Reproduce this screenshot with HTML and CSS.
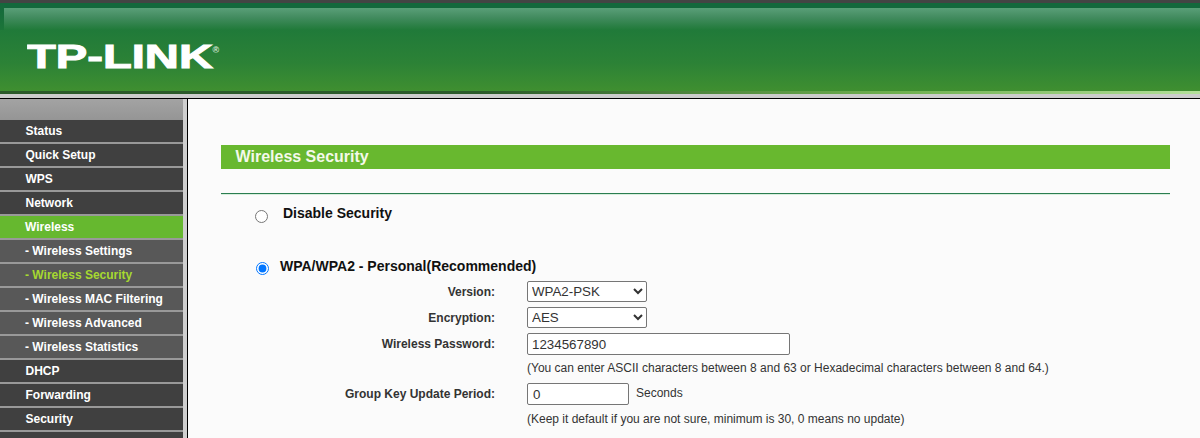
FILE: index.html
```html
<!DOCTYPE html>
<html>
<head>
    <meta charset="utf-8">
    <title>Wireless Security</title>
    <link rel="stylesheet" href="styles.css">
</head>
<body>
    <!-- top banner -->
    <div class="banner">
        <div class="banner-main">
            <svg class="logo" width="200" height="42" viewBox="0 0 200 42">
                <text class="logo-text" x="0" y="31" textLength="186" lengthAdjust="spacingAndGlyphs">TP-LINK</text>
                <text class="logo-mark" x="185.5" y="16">®</text>
            </svg>
        </div>
        <div class="banner-edge"></div>
    </div>

    <div class="layout">
        <!-- left menu -->
        <div class="menu">
            <div class="menu-top"></div>
            <a class="item">Status</a>
            <a class="item">Quick Setup</a>
            <a class="item">WPS</a>
            <a class="item">Network</a>
            <a class="item item-active">Wireless</a>
            <a class="item sub">- Wireless Settings</a>
            <a class="item sub sub-active">- Wireless Security</a>
            <a class="item sub">- Wireless MAC Filtering</a>
            <a class="item sub">- Wireless Advanced</a>
            <a class="item sub">- Wireless Statistics</a>
            <a class="item">DHCP</a>
            <a class="item">Forwarding</a>
            <a class="item">Security</a>
            <a class="item"></a>
        </div>

        <!-- content -->
        <div class="content">
            <div class="title">Wireless Security</div>
            <div class="rule"></div>

            <label class="option option-off">
                <input type="radio" name="security">
                <span>Disable Security</span>
            </label>

            <label class="option option-on">
                <input type="radio" name="security" checked>
                <span>WPA/WPA2 - Personal(Recommended)</span>
            </label>

            <div class="form">
                <label class="form-label">Version:</label>
                <select class="field field-select">
                    <option>WPA2-PSK</option>
                </select>

                <label class="form-label">Encryption:</label>
                <select class="field field-select">
                    <option>AES</option>
                </select>

                <label class="form-label">Wireless Password:</label>
                <input class="field field-password" type="text" value="1234567890">

                <div class="note note-password">(You can enter ASCII characters between 8 and 63 or Hexadecimal characters between 8 and 64.)</div>

                <label class="form-label">Group Key Update Period:</label>
                <div class="period">
                    <input class="field field-period" type="text" value="0">
                    <span>Seconds</span>
                </div>

                <div class="note note-period">(Keep it default if you are not sure, minimum is 30, 0 means no update)</div>
            </div>
        </div>
    </div>
</body>
</html>
```

FILE: styles.css
```css
* {
    margin: 0;
    padding: 0;
    box-sizing: border-box;
}

html, body {
    height: 438px;
    overflow: hidden;
}

body {
    font-family: "Liberation Sans", Arial, sans-serif;
    font-size: 12px;
    background: #fbfbfb;
}

/* top banner */
.banner {
    height: 99px;
    border-top: 3px solid #444444;
    background: #cccccc;
    border-bottom: 1px solid #000000;
}

.banner-main {
    height: 88px;
    padding: 34px 0 0 27px;
    background:
        linear-gradient(#14683c, #1c7539) 0 0 / 4px 27px no-repeat,
        linear-gradient(#14683c 0, #14683c 5px, #5a9f78 5px, #438c60 14px, #207a39 27px, #2c8236 60px, #3f8f30 88px);
}

.logo {
    display: block;
}

.logo-text {
    font-family: "Liberation Sans", Arial, sans-serif;
    font-size: 33px;
    font-weight: bold;
    fill: #ffffff;
    stroke: #ffffff;
    stroke-width: 1px;
}

.logo-mark {
    font-family: "Liberation Sans", Arial, sans-serif;
    font-size: 9px;
    font-weight: bold;
    fill: #d5e8d5;
}

.banner-edge {
    height: 3px;
    background: linear-gradient(90deg, #2b5a2a 0, #2b5a2a 40%, #6fb04f 75%, #b4e09a 100%);
}

.layout {
    display: flex;
    height: 339px;
}

/* left menu */
.menu {
    flex: none;
    width: 188px;
    background: #999999;
    border-right: 1px solid #000000;
    padding-right: 4px;
    box-shadow: inset -4px 0 0 #cfcfcf;
}

.menu-top {
    height: 21px;
    background: linear-gradient(#a3a3a3, #959595);
}

.item {
    display: block;
    height: 24px;
    line-height: 23px;
    padding-left: 25.5px;
    color: #ffffff;
    font-weight: bold;
    background: #404040;
    border-bottom: 2px solid #999999;
}

.item-active {
    padding-left: 25px;
    background: #66b82f;
}

.sub {
    padding-left: 25px;
    background: #585858;
}

.sub-active {
    color: #a6d930;
}

/* content */
.content {
    flex: 1;
    min-width: 0;
    padding: 46px 30px 0 33px;
    background: #fbfbfb;
}

.title {
    height: 24px;
    line-height: 24px;
    padding-left: 14.5px;
    font-size: 16px;
    font-weight: bold;
    color: #f4f9ea;
    background: #68b82f;
}

.rule {
    height: 2px;
    margin-top: 24px;
    background: linear-gradient(#2a7d50 50%, #d8eedd 50%);
}

.option {
    display: flex;
    font-size: 14px;
    font-weight: bold;
    color: #111111;
}

.option input {
    width: 13px;
    height: 13px;
    flex: none;
}

.option span {
    margin-top: -1px;
}

.option-off {
    margin: 11px 0 0 34px;
    height: 30px;
}

.option-off input {
    margin-top: 4px;
}

.option-off span {
    margin-left: 15px;
}

.option-on {
    margin: 23px 0 0 35px;
    height: 22px;
}

.option-on input {
    margin-top: 3px;
}

.option-on span {
    margin-left: 11px;
}

/* form rows */
.form {
    display: grid;
    grid-template-columns: 274px 1fr;
    column-gap: 32px;
    row-gap: 5px;
    color: #333333;
}

.form-label {
    grid-column: 1;
    align-self: center;
    text-align: right;
    font-weight: bold;
}

.field {
    grid-column: 2;
    height: 21px;
    font-family: "Liberation Sans", Arial, sans-serif;
    font-size: 13.33px;
    color: #333333;
    background: #ffffff;
    border: 1px solid #767676;
    border-radius: 2px;
}

.field-select {
    width: 120px;
}

.field-password {
    width: 263px;
    height: 22px;
    padding-left: 4px;
}

.field-period {
    width: 102px;
    height: 22px;
    padding-left: 5px;
}

.period {
    grid-column: 2;
    display: flex;
    align-items: flex-start;
    gap: 7px;
}

.period span {
    margin-top: 3px;
}

.note {
    grid-column: 2;
    white-space: nowrap;
}

.note-password {
    height: 18px;
    padding-top: 1px;
}

.note-period {
    padding-top: 2px;
}
```
